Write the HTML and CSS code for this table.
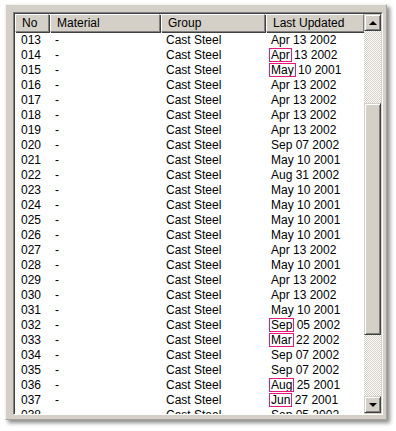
FILE: index.html
```html
<!DOCTYPE html>
<html>
<head>
<meta charset="utf-8">
<link rel="stylesheet" href="styles.css">
</head>
<body>
<div class="window">
  <div class="list">
    <div class="main">
      <div class="head">
        <div class="hc">No</div>
        <div class="hc">Material</div>
        <div class="hc">Group</div>
        <div class="hc">Last Updated</div>
      </div>
      <div class="rows">
        <div class="row"><span>013</span><span>-</span><span>Cast Steel</span><span>Apr 13 2002</span></div>
        <div class="row"><span>014</span><span>-</span><span>Cast Steel</span><span><i class="mark">Apr</i> 13 2002</span></div>
        <div class="row"><span>015</span><span>-</span><span>Cast Steel</span><span><i class="mark">May</i> 10 2001</span></div>
        <div class="row"><span>016</span><span>-</span><span>Cast Steel</span><span>Apr 13 2002</span></div>
        <div class="row"><span>017</span><span>-</span><span>Cast Steel</span><span>Apr 13 2002</span></div>
        <div class="row"><span>018</span><span>-</span><span>Cast Steel</span><span>Apr 13 2002</span></div>
        <div class="row"><span>019</span><span>-</span><span>Cast Steel</span><span>Apr 13 2002</span></div>
        <div class="row"><span>020</span><span>-</span><span>Cast Steel</span><span>Sep 07 2002</span></div>
        <div class="row"><span>021</span><span>-</span><span>Cast Steel</span><span>May 10 2001</span></div>
        <div class="row"><span>022</span><span>-</span><span>Cast Steel</span><span>Aug 31 2002</span></div>
        <div class="row"><span>023</span><span>-</span><span>Cast Steel</span><span>May 10 2001</span></div>
        <div class="row"><span>024</span><span>-</span><span>Cast Steel</span><span>May 10 2001</span></div>
        <div class="row"><span>025</span><span>-</span><span>Cast Steel</span><span>May 10 2001</span></div>
        <div class="row"><span>026</span><span>-</span><span>Cast Steel</span><span>May 10 2001</span></div>
        <div class="row"><span>027</span><span>-</span><span>Cast Steel</span><span>Apr 13 2002</span></div>
        <div class="row"><span>028</span><span>-</span><span>Cast Steel</span><span>May 10 2001</span></div>
        <div class="row"><span>029</span><span>-</span><span>Cast Steel</span><span>Apr 13 2002</span></div>
        <div class="row"><span>030</span><span>-</span><span>Cast Steel</span><span>Apr 13 2002</span></div>
        <div class="row"><span>031</span><span>-</span><span>Cast Steel</span><span>May 10 2001</span></div>
        <div class="row"><span>032</span><span>-</span><span>Cast Steel</span><span><i class="mark">Sep</i> 05 2002</span></div>
        <div class="row"><span>033</span><span>-</span><span>Cast Steel</span><span><i class="mark">Mar</i> 22 2002</span></div>
        <div class="row"><span>034</span><span>-</span><span>Cast Steel</span><span>Sep 07 2002</span></div>
        <div class="row"><span>035</span><span>-</span><span>Cast Steel</span><span>Sep 07 2002</span></div>
        <div class="row"><span>036</span><span>-</span><span>Cast Steel</span><span><i class="mark">Aug</i> 25 2001</span></div>
        <div class="row"><span>037</span><span>-</span><span>Cast Steel</span><span><i class="mark">Jun</i> 27 2001</span></div>
        <div class="row"><span>038</span><span>-</span><span>Cast Steel</span><span>Sep 05 2002</span></div>
      </div>
    </div>
    <div class="scroll">
      <div class="btn"><span class="arr up"></span></div>
      <div class="track t1"></div>
      <div class="thumb"></div>
      <div class="track t2"></div>
      <div class="btn"><span class="arr down"></span></div>
    </div>
  </div>
</div>
</body>
</html>
```

FILE: styles.css
```css
html, body {
  margin: 0;
  padding: 0;
  background: #ffffff;
}
body {
  width: 396px;
  height: 431px;
  overflow: hidden;
  font-family: "Liberation Sans", Arial, sans-serif;
  font-size: 12px;
  color: #000;
}
.window {
  margin: 4px 0 0 5px;
  width: 382px;
  height: 416px;
  box-sizing: border-box;
  background: #d4d0c8;
  border-top: 1px solid #f4f3f0;
  border-left: 1px solid #f4f3f0;
  border-right: 1px solid #a8a49c;
  border-bottom: 1px solid #a8a49c;
  box-shadow: 3px 3px 4px rgba(0,0,0,0.45);
  padding: 7px 0 0 7px;
}
.list {
  width: 370px;
  height: 403px;
  box-sizing: border-box;
  border-top: 1px solid #808080;
  border-left: 1px solid #808080;
  border-right: 1px solid #ffffff;
  border-bottom: 1px solid #ffffff;
  display: flex;
}
.list > .main, .list > .scroll {
  border-top: 1px solid #404040;
}
.main {
  flex: 1;
  background: #fff;
  border-left: 1px solid #404040;
  overflow: hidden;
  display: flex;
  flex-direction: column;
}
.head {
  display: grid;
  grid-template-columns: 34px 111px 105px 1fr;
  height: 18px;
  flex: none;
}
.hc {
  background: #d4d0c8;
  border-top: 1px solid #fff;
  border-left: 1px solid #fff;
  border-right: 1px solid #808080;
  border-bottom: 1px solid #808080;
  box-shadow: 1px 1px 0 #404040;
  padding-left: 6px;
  line-height: 16px;
  white-space: nowrap;
  overflow: hidden;
}
.head .hc + .hc { margin-left: 1px; }
.rows {
  padding-top: 1px;
}
.row {
  display: grid;
  grid-template-columns: 34px 111px 105px 1fr;
  height: 15px;
  line-height: 15px;
  white-space: nowrap;
}
.row span {
  padding-left: 6px;
}
.mark {
  font-style: normal;
  outline: 1px solid #e8177d;
  display: inline-block;
  line-height: 12px;
  padding: 0 1px 0 0;
  margin-left: -1px;
  padding-left: 1px;
}
.scroll {
  width: 17px;
  flex: none;
  display: flex;
  flex-direction: column;
  background: #d4d0c8;
  border-right: 1px solid #d4d0c8;
  border-bottom: 1px solid #d4d0c8;
}
.btn, .thumb {
  box-sizing: border-box;
  background: #d4d0c8;
  border-top: 1px solid #d4d0c8;
  border-left: 1px solid #d4d0c8;
  border-right: 1px solid #404040;
  border-bottom: 1px solid #404040;
  box-shadow: inset 1px 1px 0 #fff, inset -1px -1px 0 #808080;
}
.btn {
  height: 17px;
  flex: none;
  display: flex;
  align-items: center;
  justify-content: center;
}
.arr {
  width: 0;
  height: 0;
  border-left: 4px solid transparent;
  border-right: 4px solid transparent;
}
.arr.up { border-bottom: 4px solid #000; }
.arr.down { border-top: 4px solid #000; }
.track {
  background: repeating-conic-gradient(#d4d0c8 0 25%, #ffffff 0 50%) 0 0 / 2px 2px;
}
.t1 { height: 72px; flex: none; }
.thumb { height: 232px; flex: none; }
.t2 { flex: 1; }
```
